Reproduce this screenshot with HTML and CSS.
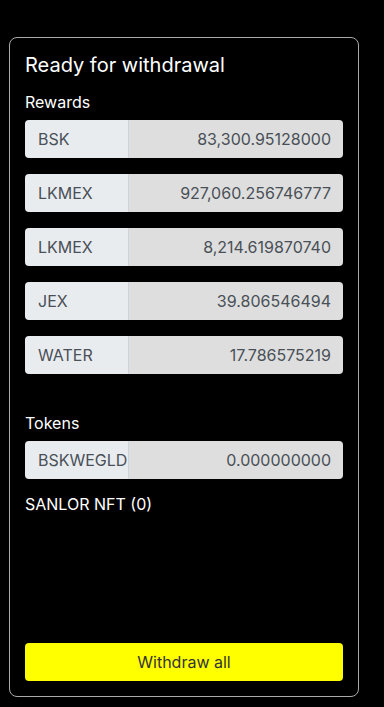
FILE: index.html
```html
<!DOCTYPE html>
<html>
<head>
<meta charset="utf-8">
<link rel="stylesheet" href="styles.css">
</head>
<body>
<div class="card">
  <h2 class="title">Ready for withdrawal</h2>
  <div class="section-label">Rewards</div>
  <div class="group"><span class="label">BSK</span><span class="value">83,300.95128000</span></div>
  <div class="group"><span class="label">LKMEX</span><span class="value">927,060.256746777</span></div>
  <div class="group"><span class="label">LKMEX</span><span class="value">8,214.619870740</span></div>
  <div class="group"><span class="label">JEX</span><span class="value">39.806546494</span></div>
  <div class="group"><span class="label">WATER</span><span class="value">17.786575219</span></div>
  <div class="section-label tokens">Tokens</div>
  <div class="group"><span class="label">BSKWEGLD</span><span class="value">0.000000000</span></div>
  <div class="nft">SANLOR NFT (0)</div>
  <button class="btn">Withdraw all</button>
</div>
</body>
</html>
```

FILE: styles.css
```css
html, body {
  margin: 0;
  padding: 0;
  background: #000;
}
body {
  font-family: Inter, "Noto Sans", sans-serif;
  padding: 37px 25px 11px 9px;
}
.card {
  box-sizing: border-box;
  height: 660px;
  border: 1px solid #aaa;
  border-radius: 8px;
  padding: 15px 15px 15px 15px;
  display: flex;
  flex-direction: column;
}
.title {
  margin: 0 0 13px 0;
  font-size: 20px;
  line-height: 24px;
  font-weight: 400;
  color: #fff;
}
.section-label {
  color: #fff;
  font-size: 16px;
  line-height: 24px;
  margin-bottom: 6px;
}
.section-label.tokens {
  margin-top: 21px;
}
.group {
  display: flex;
  height: 38px;
  margin-bottom: 16px;
  border-radius: 4px;
  overflow: hidden;
  font-size: 16px;
  color: #495057;
}
.label {
  width: 104px;
  flex: none;
  box-sizing: border-box;
  background: #e9ecef;
  border-right: 1px solid #ced4da;
  padding: 0 12px 0 13px;
  display: flex;
  align-items: center;
}
.value {
  flex: 1;
  background: #dedede;
  display: flex;
  align-items: center;
  justify-content: flex-end;
  padding: 0 12px;
}
.nft {
  color: #fff;
  font-size: 16px;
  line-height: 24px;
  margin-top: -3px;
}
.btn {
  margin-top: auto;
  height: 38px;
  border: none;
  border-radius: 4px;
  background: #ffff00;
  color: #333;
  font-family: Inter, "Noto Sans", sans-serif;
  font-size: 16px;
}
```
